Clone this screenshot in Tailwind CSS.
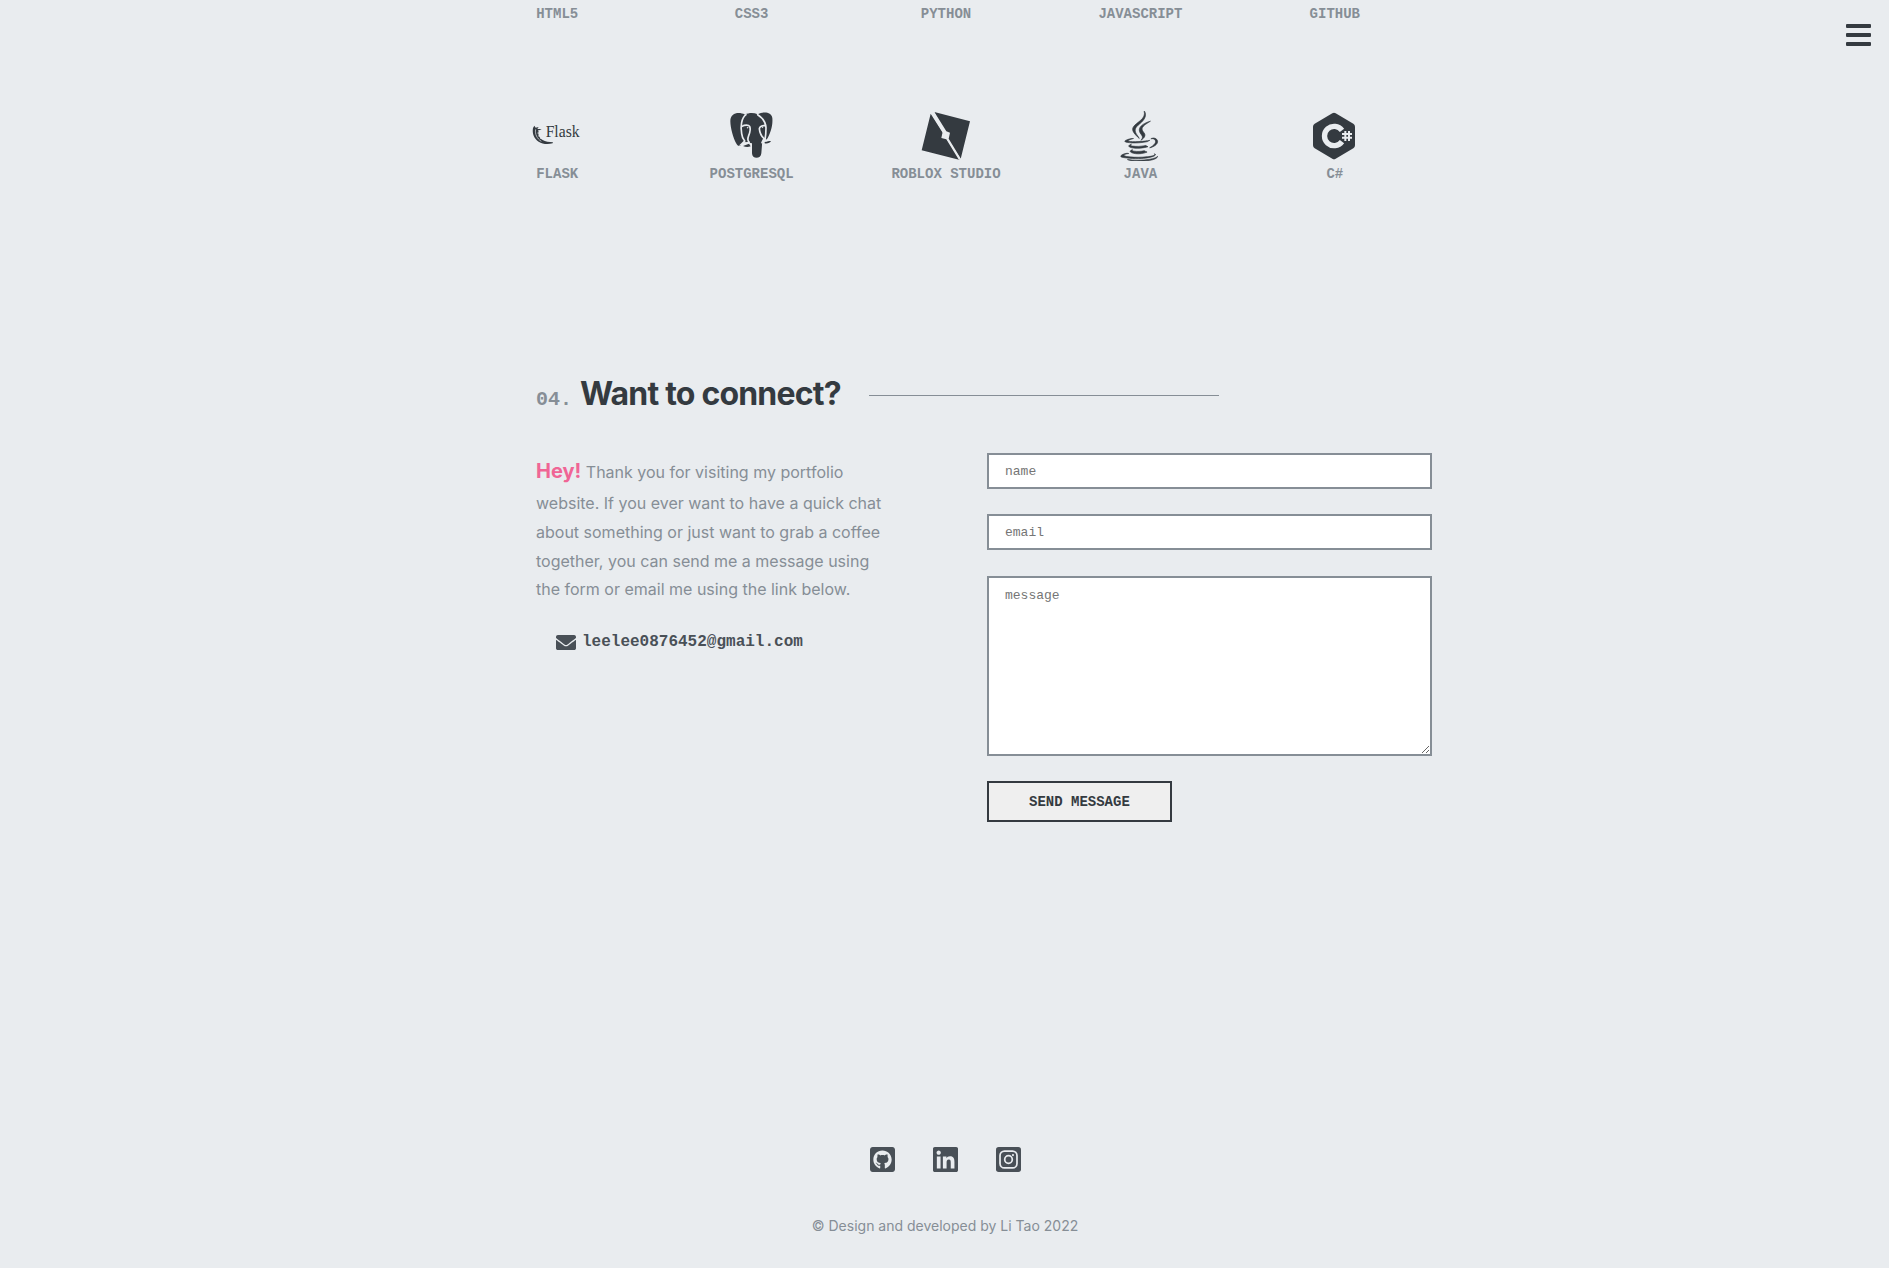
<!DOCTYPE html>
<html lang="en">
<head>
<meta charset="utf-8">
<meta name="viewport" content="width=device-width, initial-scale=1">
<title>Li Tao | Portfolio</title>
<script src="https://cdn.jsdelivr.net/npm/@tailwindcss/browser@4"></script>
</head>
<body class="flex min-h-screen flex-col bg-[#e9ecef] pl-[3px] font-['Inter',sans-serif] text-[#868e96]">
  <button type="button" aria-label="Open menu" class="fixed top-5 right-3.5 p-1 text-[#343a40]">
    <svg class="h-[22px] w-[25px]" viewBox="0 0 25 22" fill="currentColor"><rect width="25" height="4" rx="1"/><rect y="9" width="25" height="4" rx="1"/><rect y="18" width="25" height="4" rx="1"/></svg>
  </button>

  <main class="mx-auto w-full max-w-[972px]">
    <section aria-label="Skills" class="pt-0.5 font-['Liberation_Mono',monospace] text-sm leading-6 font-bold">
      <ul class="grid grid-cols-5 gap-y-[85px] text-center">
        <li>HTML5</li>
        <li>CSS3</li>
        <li>PYTHON</li>
        <li>JAVASCRIPT</li>
        <li>GITHUB</li>
        <li class="flex flex-col items-center gap-px">
          <svg class="size-[50px] text-[#343a40]" viewBox="36 33 150 150" fill="currentColor">
            <path d="M39 84l4-7 4 6 9-2-4 6 13 0-9 5c-3 12 2 22 12 28 8 5 19 6 31 7l-1 3c-16 4-31 2-42-5-14-9-20-24-17-41z"/>
            <path d="M47 88c-3 14 4 28 17 36M54 92l8-1M52 99l9 1M54 108l8-1M60 116l7-3" fill="none" stroke="#e9ecef" stroke-width="2"/>
            <text x="77" y="112" font-family="Liberation Serif, serif" font-size="47" font-weight="400">Flask</text>
          </svg>
          FLASK
        </li>
        <li class="flex flex-col items-center gap-px">
          <svg class="size-[50px] text-[#343a40]" viewBox="20 33 150 150" fill="currentColor">
            <path d="M74 44C54 34 30 40 30 63c0 22 9 51 17 66 5 10 11 12 17 4l9-7 22 4v30c0 18 27 18 28 0l3-38 12-2c13-19 20-45 18-66-3-18-26-20-44-11-12-5-26-5-38 1z"/>
            <path d="M68 138l18-7 5 8c-8 3-16 2-23-1zM133 126c7-1 13-3 19-3-2 5-11 9-19 7z"/>
            <g fill="none" stroke="#e9ecef" stroke-width="5" stroke-linecap="round">
              <path d="M77 44C63 54 60 80 64 101c1 10 2 14 9 22l-10 10 22-5"/>
              <path d="M65 79c8-5 20-5 23 0 4 9 1 18-3 28-2 5-4 15 2 20"/>
              <path d="M112 44c15 9 24 22 25 39 0 14-1 25-3 37M133 77c-7-1-15 3-16 9 1 12 6 23 15 31M125 128l4-8 11 1"/>
            </g>
            <path d="M79 81l6 1-3 4zM124 81l5 0-2 4z" fill="#e9ecef"/>
          </svg>
          POSTGRESQL
        </li>
        <li class="flex flex-col items-center gap-px">
          <svg class="size-[50px] text-[#343a40]" viewBox="34 33 150 150" fill="currentColor">
            <path d="M74 36l107 28-28 113-45-70zM63 41l88 139-115-29z"/>
            <path d="M62 36l12 0 36 58 11 4-4 18 37 61-6 3-38-62-15-4 4-18z" fill="#e9ecef"/>
          </svg>
          ROBLOX STUDIO
        </li>
        <li class="flex flex-col items-center gap-px">
          <svg class="size-[50px] text-[#343a40]" viewBox="8 0 384 512" fill="currentColor" stroke="currentColor" stroke-width="7"><path d="M277.74 312.9c9.8-6.7 23.4-12.5 23.4-12.5s-38.7 7-77.2 10.2c-47.1 3.9-97.7 4.7-123.1 1.3-60.1-8 33-30.1 33-30.1s-36.1-2.4-80.6 19c-52.5 25.4 130 37 224.5 12.1zm-85.4-32.1c-19-42.7-83.1-80.2 0-145.8C296 53.2 242.84 0 242.84 0c21.5 84.5-75.6 110.1-110.7 162.6-23.9 35.9 11.7 74.4 60.2 118.2zm114.6-176.2c.1 0-175.2 43.8-91.5 140.2 24.7 28.4-6.5 54-6.5 54s62.7-32.4 33.9-72.9c-26.9-37.8-47.5-56.6 64.1-121.3zm-6.1 270.5a12.19 12.19 0 0 1-2 2.6c128.3-33.7 81.1-118.9 19.8-97.3a17.33 17.33 0 0 0-8.2 6.3 70.45 70.45 0 0 1 11-3c31-6.5 75.5 41.5-20.6 91.4zM348 437.4s14.5 11.9-15.9 21.2c-57.9 17.5-240.8 22.8-291.6.7-18.3-7.9 16-19 26.8-21.3 11.2-2.4 17.7-2 17.7-2-20.3-14.3-131.3 28.1-56.4 40.2C232.84 509.4 401 461.3 348 437.4zM124.44 396c-78.7 22 47.9 67.4 148.1 24.5a185.89 185.89 0 0 1-28.2-13.8c-44.7 8.5-65.4 9.1-106 4.5-33.5-3.8-13.9-15.2-13.9-15.2zm179.8 97.2c-78.7 14.8-175.8 13.1-233.3 3.6 0-.1 11.8 9.7 72.4 13.6 92.2 5.9 233.8-3.3 237.1-46.9 0 0-6.4 16.5-76.2 29.7zM260.64 353c-59.2 11.4-93.5 11.1-136.8 6.6-33.5-3.5-11.6-19.7-11.6-19.7-86.8 28.8 48.2 61.4 169.5 25.9a60.37 60.37 0 0 1-21.1-12.8z"/></svg>
          JAVA
        </li>
        <li class="flex flex-col items-center gap-px">
          <svg class="size-[50px] text-[#343a40]" viewBox="30 33 150 150" fill="currentColor">
            <path d="M97 40q5-3 10 0l53 31q5 3 5 9v56q0 6-5 9l-53 31q-5 3-10 0l-53-31q-5-3-5-9V80q0-6 5-9z"/>
            <path d="M126 91a29 29 0 1 0 0 34" fill="none" stroke="#e9ecef" stroke-width="16"/>
            <path d="M126 93h14v30h-14z"/>
            <path d="M136 93v30M147 93v30M126 102h30M126 113h30" fill="none" stroke="#e9ecef" stroke-width="6"/>
          </svg>
          C#
        </li>
      </ul>
    </section>

    <section aria-labelledby="connect" class="pt-[188px] pl-[76px]">
      <div class="flex items-center">
        <h2 id="connect" class="flex items-baseline gap-2 text-[32px] leading-10 font-bold tracking-tight whitespace-nowrap text-[#343a40]"><span class="font-['Liberation_Mono',monospace] text-xl tracking-normal text-[#868e96]">04.</span>Want to connect?</h2>
        <span class="mt-[3px] ml-7 h-px w-[350px] bg-[#868e96]"></span>
      </div>

      <div class="flex items-start justify-between pt-[39px]">
        <div class="w-[352px]">
          <p class="leading-[1.8]"><strong class="text-xl leading-[1.8] text-[#f06595]">Hey!</strong> Thank you for visiting my portfolio website. If you ever want to have a quick chat about something or just want to grab a coffee together, you can send me a message using the form or email me using the link below.</p>
          <a href="mailto:leelee0876452@gmail.com" class="mt-[26px] ml-5 flex items-center gap-1.5 font-['Liberation_Mono',monospace] leading-6 font-bold text-[#495057]">
            <svg class="h-[15px] w-5" viewBox="0 64 512 384" fill="currentColor"><path d="M502.3 190.8c3.9-3.1 9.7-.2 9.7 4.7V400c0 26.5-21.5 48-48 48H48c-26.5 0-48-21.5-48-48V195.6c0-5 5.7-7.8 9.7-4.7 22.4 17.4 52.1 39.5 154.1 113.6 21.1 15.4 56.7 47.8 92.2 47.6 35.7.3 72-32.8 92.3-47.6 102-74.1 131.6-96.3 154-113.7zM256 320c23.2.4 56.6-29.2 73.4-41.4 132.7-96.3 142.8-104.7 173.4-128.7 5.8-4.5 9.2-11.5 9.2-18.9v-19c0-26.5-21.5-48-48-48H48c-26.5 0-48 21.5-48 48v19c0 7.4 3.4 14.3 9.2 18.9 30.6 23.9 40.7 32.4 173.4 128.7 16.8 12.2 50.2 41.8 73.4 41.4z"/></svg>
            leelee0876452@gmail.com
          </a>
        </div>

        <form class="flex w-[445px] flex-col items-start gap-[25px] font-['Liberation_Mono',monospace] text-[13px] text-[#343a40]">
          <input type="text" name="name" aria-label="name" placeholder="name" class="h-9 w-full border-2 border-[#868e96] bg-white px-4 placeholder:text-[#757575]">
          <input type="email" name="email" aria-label="email" placeholder="email" class="h-9 w-full border-2 border-[#868e96] bg-white px-4 placeholder:text-[#757575]">
          <textarea name="message" aria-label="message" placeholder="message" class="mt-px block h-[180px] w-full resize border-2 border-[#868e96] bg-white px-4 py-2 placeholder:text-[#757575]"></textarea>
          <button type="submit" class="h-[41px] border-2 border-[#343a40] bg-[#efefef] px-10 text-sm font-bold">SEND MESSAGE</button>
        </form>
      </div>
    </section>
  </main>

  <footer class="mt-auto flex flex-col items-center gap-[42px] pr-0.5 pb-[30px] text-sm">
    <div class="flex gap-[38px] text-[#495057]">
      <a href="#github" aria-label="GitHub"><svg class="size-[25px]" viewBox="0 32 448 448" fill="currentColor"><path d="M400 32H48C21.5 32 0 53.5 0 80v352c0 26.5 21.5 48 48 48h352c26.5 0 48-21.5 48-48V80c0-26.5-21.5-48-48-48zM277.3 415.7c-8.4 1.5-11.5-3.7-11.5-8 0-5.4.2-33 .2-55.3 0-15.6-5.2-25.5-11.3-30.7 37-4.1 76-9.2 76-73.1 0-18.2-6.5-27.3-17.1-39 1.7-4.3 7.4-22-1.7-45-13.9-4.3-45.7 17.9-45.7 17.9-13.2-3.7-27.5-5.6-41.6-5.6-14.1 0-28.4 1.9-41.6 5.6 0 0-31.8-22.2-45.7-17.9-9.1 22.9-3.5 40.6-1.7 45-10.6 11.7-15.6 20.8-15.6 39 0 63.6 37.3 69 74.3 73.1-4.8 4.3-9.1 11.7-10.6 22.3-9.5 4.3-33.8 11.7-48.3-13.9-9.1-15.8-25.5-17.1-25.5-17.1-16.2-.2-1.1 10.2-1.1 10.2 10.8 5 18.4 24.2 18.4 24.2 9.7 29.7 56.1 19.7 56.1 19.7 0 13.9.2 36.5.2 40.6 0 4.3-3 9.5-11.5 8-66-22.1-112.2-84.9-112.2-158.3 0-91.8 70.2-161.5 162-161.5S388 165.6 388 257.4c.1 73.4-44.7 136.3-110.7 158.3z"/></svg></a>
      <a href="#linkedin" aria-label="LinkedIn"><svg class="size-[25px]" viewBox="0 32 448 448" fill="currentColor"><path d="M416 32H31.9C14.3 32 0 46.5 0 64.3v383.4C0 465.5 14.3 480 31.9 480H416c17.6 0 32-14.5 32-32.3V64.3c0-17.8-14.4-32.3-32-32.3zM135.4 416H69V202.2h66.5V416zm-33.2-243c-21.3 0-38.5-17.3-38.5-38.5S80.9 96 102.2 96c21.2 0 38.5 17.3 38.5 38.5 0 21.3-17.2 38.5-38.5 38.5zm282.1 243h-66.4V312c0-24.8-.5-56.7-34.5-56.7-34.6 0-39.9 27-39.9 54.9V416h-66.4V202.2h63.7v29.2h.9c8.9-16.8 30.6-34.5 62.9-34.5 67.2 0 79.7 44.3 79.7 101.9V416z"/></svg></a>
      <a href="#instagram" aria-label="Instagram"><svg class="size-[25px]" viewBox="0 0 448 448"><rect width="448" height="448" rx="48" fill="currentColor"/><g fill="none" stroke="#e9ecef" stroke-width="31"><rect x="72" y="72" width="304" height="304" rx="80"/><circle cx="224" cy="224" r="68"/></g><circle cx="304" cy="145" r="19" fill="#e9ecef"/></svg></a>
    </div>
    <p class="leading-6">© Design and developed by Li Tao 2022</p>
  </footer>
</body>
</html>
